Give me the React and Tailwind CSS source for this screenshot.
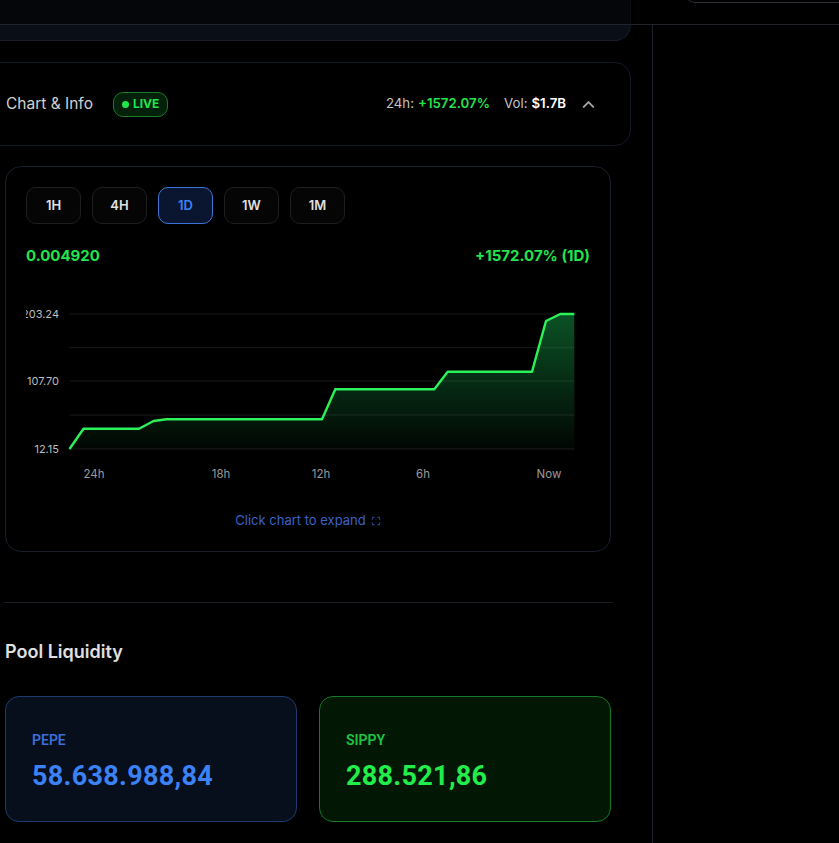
import React from "react";
import { ChevronUp, Maximize } from "lucide-react";

const pts = [
  [43.5, 159], [57.5, 138.7], [113, 138.7], [127.5, 131], [140.5, 129.3],
  [296, 129.3], [309.3, 99.3], [408.3, 99.3], [421.7, 81.7], [506, 81.7],
  [520, 31], [534.3, 24], [548.3, 24],
];
const line = pts.map((p) => p.join(",")).join(" ");
const area = line + " 548.3,159 43.5,159";

function Chart() {
  const grid = [24, 57.7, 91, 125, 159];
  return (
    <svg width="566" height="200" className="mt-[24px] block overflow-hidden">
      <defs>
        <linearGradient id="g" x1="0" y1="0" x2="0" y2="1">
          <stop offset="0%" stopColor="#16a34a" stopOpacity="0.5" />
          <stop offset="100%" stopColor="#16a34a" stopOpacity="0.04" />
        </linearGradient>
      </defs>
      {grid.map((y) => (
        <line key={y} x1="43.5" x2="548.3" y1={y} y2={y} stroke="#1a1a1a" strokeWidth="1" />
      ))}
      <polygon points={area} fill="url(#g)" />
      <polyline points={line} fill="none" stroke="#2cf25a" strokeWidth="2.4" strokeLinejoin="round" />
      <g fill="#bdbdbd" fontSize="11" textAnchor="end" fontFamily="Inter, sans-serif">
        <text x="33" y="28">203.24</text>
        <text x="33" y="95">107.70</text>
        <text x="33" y="163">12.15</text>
      </g>
      <g fill="#9a9a9a" fontSize="11.5" textAnchor="middle" fontFamily="Inter, sans-serif">
        <text x="68" y="188">24h</text>
        <text x="195" y="188">18h</text>
        <text x="295" y="188">12h</text>
        <text x="397" y="188">6h</text>
        <text x="523" y="188">Now</text>
      </g>
    </svg>
  );
}

function TfButton({ label, active }) {
  return (
    <div
      className={
        active
          ? "flex h-[37px] w-[55px] items-center justify-center rounded-[10px] border border-[#3b74d8] bg-[#0a1630] text-[13px] font-semibold text-[#3b82f6]"
          : "flex h-[37px] w-[55px] items-center justify-center rounded-[10px] border border-[#1e1e1e] bg-[#050505] text-[13px] font-semibold text-[#e0e0e0]"
      }
    >
      {label}
    </div>
  );
}

export default function App() {
  return (
    <div className="relative flex h-[843px] w-[839px] overflow-hidden bg-black font-['Inter',sans-serif]">
      <div className="-ml-[20px] flex w-[652px] shrink-0 flex-col">
        <div className="mr-[1px] h-[41px] rounded-br-[16px] border-b border-r border-[#171c28] bg-[#0a0e16]" />

        <div className="mr-[1px] mt-[21px] flex h-[84px] items-center rounded-[16px] border border-[#141927] pl-[25px] pr-[32px]">
          <span className="text-[15.5px] text-[#d1d1d1]">Chart &amp; Info</span>
          <span className="ml-[20px] flex h-[25px] items-center gap-[4px] rounded-[10px] border border-[#1b7a2c] bg-[#03200a] px-[8px] text-[12px] font-bold text-[#22e54b]">
            <span className="h-[7px] w-[7px] rounded-full bg-[#22e54b]" />
            LIVE
          </span>
          <div className="ml-auto flex items-center text-[13.25px]">
            <span className="text-[#c4c4c4]">24h:</span>
            <span className="ml-[4px] font-semibold text-[#22e54b]">+1572.07%</span>
            <span className="ml-[14px] text-[#c4c4c4]">Vol:</span>
            <span className="ml-[4px] font-semibold text-white">$1.7B</span>
            <ChevronUp className="ml-[13px]" size={19} strokeWidth={2.5} color="#a3a3a3" />
          </div>
        </div>

        <div className="flex flex-col pl-[25px] pr-[21px]">
          <div className="mt-[20px] flex flex-col rounded-[16px] border border-[#181d2b] px-[20px] pb-[21px] pt-[20px]">
            <div className="flex gap-[11px]">
              <TfButton label="1H" />
              <TfButton label="4H" />
              <TfButton label="1D" active />
              <TfButton label="1W" />
              <TfButton label="1M" />
            </div>
            <div className="mt-[22px] flex h-[20px] items-center justify-between text-[15px] font-bold text-[#22e54b]">
              <span>0.004920</span>
              <span>+1572.07% (1D)</span>
            </div>
            <Chart />
            <div className="mt-[22px] flex h-[18px] items-center justify-center gap-[5px] text-[13px] text-[#3a62c9]">
              Click chart to expand
              <Maximize size={10} strokeWidth={2} color="#3a62c9" />
            </div>
          </div>

          <div className="-ml-[1px] -mr-[2px] mt-[50px] h-px bg-[#1a1d25]" />

          <div className="mt-[37px] h-[24px] text-[18px] font-semibold leading-[24px] text-[#e0e0e0]">
            Pool Liquidity
          </div>

          <div className="mt-[32px] grid grid-cols-2 gap-[22px]">
            <div className="flex h-[126px] flex-col justify-center rounded-[14px] border border-[#1e3a6e] bg-[#070e1c] pl-[26px] pt-[6px]">
              <span className="font-['Roboto',sans-serif] text-[14px] font-semibold leading-[18px] text-[#3b6fd6]">PEPE</span>
              <span className="mt-[10px] font-['Roboto',sans-serif] text-[27px] font-bold leading-[34px] tracking-[0.3px] text-[#3b82f6]">
                58.638.988,84
              </span>
            </div>
            <div className="flex h-[126px] flex-col justify-center rounded-[14px] border border-[#137a25] bg-[#021805] pl-[26px] pt-[6px]">
              <span className="font-['Roboto',sans-serif] text-[14px] font-semibold leading-[18px] text-[#1fc542]">SIPPY</span>
              <span className="mt-[10px] font-['Roboto',sans-serif] text-[27px] font-bold leading-[34px] tracking-[0.3px] text-[#22ee4b]">
                288.521,86
              </span>
            </div>
          </div>
        </div>
      </div>

      <div className="ml-[20px] mt-[25px] flex-1 border-l border-[#1b2029]" />

      <div className="absolute left-0 right-0 top-0 h-[25px] border-b border-[#1f232a] bg-black/55">
        <div className="absolute right-[-10px] top-[-30px] h-[33px] w-[164px] rounded-[10px] border border-[#2a2d33]" />
      </div>
    </div>
  );
}
